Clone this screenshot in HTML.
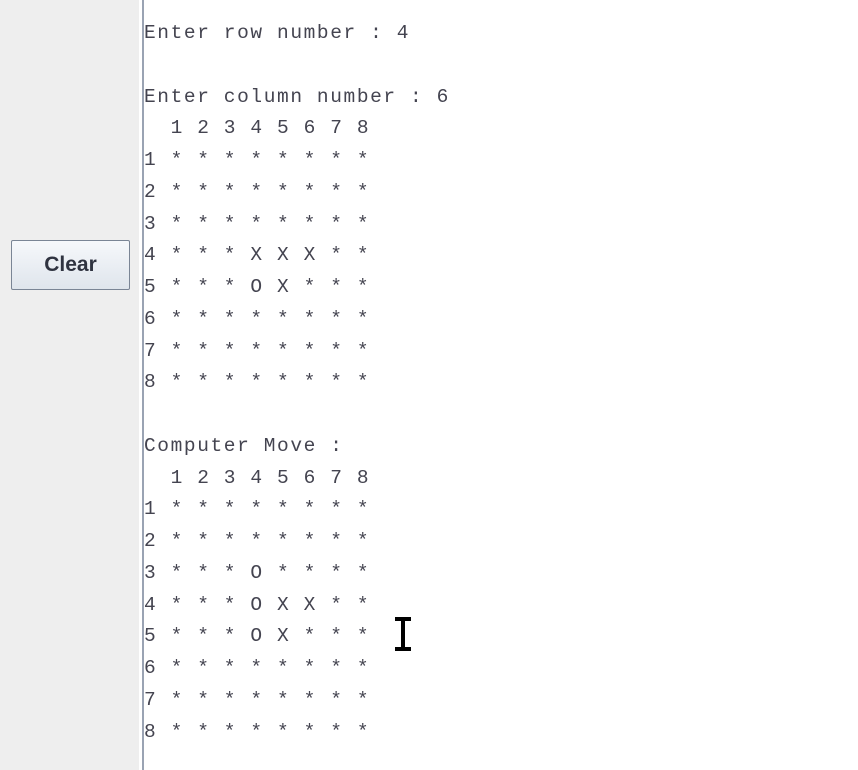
<!DOCTYPE html>
<html><head><style>
html,body{margin:0;padding:0;width:858px;height:770px;overflow:hidden;background:#fff}
#left{position:absolute;left:0;top:0;width:139px;height:770px;background:#eeeeee}
#bar{position:absolute;left:142px;top:0;width:2px;height:770px;background:#9aa3b3}
#btn{position:absolute;left:11px;top:240px;width:117px;height:48px;border:1px solid #7a8595;border-radius:2px;background:linear-gradient(#f6f8fb,#dfe5ec);font:bold 21px "Liberation Sans",sans-serif;color:#2f3340;display:flex;align-items:center;justify-content:center}
pre{position:absolute;left:144px;top:18px;margin:0;font:19.5px/31.75px "Liberation Mono",monospace;letter-spacing:1.6px;color:#444450}
#cur{position:absolute;left:393px;top:617px}
</style></head><body>
<div id="left"></div><div id="bar"></div>
<div id="btn">Clear</div>
<pre>Enter row number : 4

Enter column number : 6
  1 2 3 4 5 6 7 8
1 * * * * * * * *
2 * * * * * * * *
3 * * * * * * * *
4 * * * X X X * *
5 * * * O X * * *
6 * * * * * * * *
7 * * * * * * * *
8 * * * * * * * *

Computer Move :
  1 2 3 4 5 6 7 8
1 * * * * * * * *
2 * * * * * * * *
3 * * * O * * * *
4 * * * O X X * *
5 * * * O X * * *
6 * * * * * * * *
7 * * * * * * * *
8 * * * * * * * *</pre>
<svg id="cur" width="20" height="34" viewBox="0 0 20 34"><path d="M2 2H18M2 32H18M10 2V32" stroke="#000" stroke-width="4" fill="none"/></svg>
</body></html>
